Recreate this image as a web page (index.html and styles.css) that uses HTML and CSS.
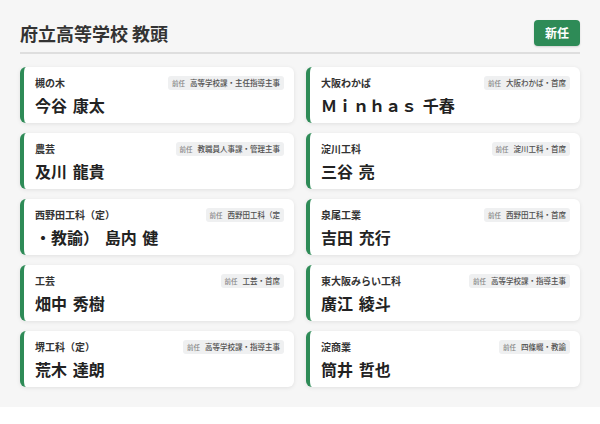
FILE: index.html
```html
<!DOCTYPE html>
<html lang="ja">
<head>
<meta charset="utf-8">
<title>府立高等学校 教頭</title>
<link rel="stylesheet" href="styles.css">
</head>
<body>
<div class="page">
  <header class="header">
    <h1 class="title">府立高等学校 教頭</h1>
    <span class="badge">新任</span>
  </header>
  <div class="grid">
    <div class="card">
      <div class="top"><span class="school">槻の木</span><span class="chip"><span class="prev">前任</span>高等学校課・主任指導主事</span></div>
      <div class="name">今谷 康太</div>
    </div>
    <div class="card">
      <div class="top"><span class="school">大阪わかば</span><span class="chip"><span class="prev">前任</span>大阪わかば・首席</span></div>
      <div class="name">Ｍｉｎｈａｓ 千春</div>
    </div>
    <div class="card">
      <div class="top"><span class="school">農芸</span><span class="chip"><span class="prev">前任</span>教職員人事課・管理主事</span></div>
      <div class="name">及川 龍貴</div>
    </div>
    <div class="card">
      <div class="top"><span class="school">淀川工科</span><span class="chip"><span class="prev">前任</span>淀川工科・首席</span></div>
      <div class="name">三谷 亮</div>
    </div>
    <div class="card">
      <div class="top"><span class="school">西野田工科（定）</span><span class="chip"><span class="prev">前任</span>西野田工科（定</span></div>
      <div class="name">・教諭） 島内 健</div>
    </div>
    <div class="card">
      <div class="top"><span class="school">泉尾工業</span><span class="chip"><span class="prev">前任</span>西野田工科・首席</span></div>
      <div class="name">吉田 充行</div>
    </div>
    <div class="card">
      <div class="top"><span class="school">工芸</span><span class="chip"><span class="prev">前任</span>工芸・首席</span></div>
      <div class="name">畑中 秀樹</div>
    </div>
    <div class="card">
      <div class="top"><span class="school">東大阪みらい工科</span><span class="chip"><span class="prev">前任</span>高等学校課・指導主事</span></div>
      <div class="name">廣江 綾斗</div>
    </div>
    <div class="card">
      <div class="top"><span class="school">堺工科（定）</span><span class="chip"><span class="prev">前任</span>高等学校課・指導主事</span></div>
      <div class="name">荒木 達朗</div>
    </div>
    <div class="card">
      <div class="top"><span class="school">淀商業</span><span class="chip"><span class="prev">前任</span>四條畷・教諭</span></div>
      <div class="name">筒井 哲也</div>
    </div>
  </div>
</div>
</body>
</html>
```

FILE: styles.css
```css
* { box-sizing: border-box; }
html, body {
  margin: 0;
  background: #ffffff;
}
body {
  font-family: "Noto Sans CJK JP", "Noto Sans", sans-serif;
  color: #2a2a2a;
}
.page {
  background: #f6f6f6;
  padding: 20px 20px 20px 20px;
}
.header {
  display: flex;
  align-items: center;
  justify-content: space-between;
  padding-bottom: 6px;
  border-bottom: 2px solid #dedede;
  margin-bottom: 13px;
}
.title {
  margin: 0;
  font-size: 18px;
  font-weight: 700;
  line-height: 26px;
  color: #333333;
}
.badge {
  background: #2e8b57;
  color: #ffffff;
  font-size: 12px;
  font-weight: 700;
  line-height: 16px;
  padding: 5px 11px;
  border-radius: 4px;
  box-shadow: 0 1px 2px rgba(0,0,0,0.15);
}
.grid {
  display: grid;
  grid-template-columns: 1fr 1fr;
  column-gap: 12px;
  row-gap: 10px;
}
.card {
  background: #ffffff;
  border-left: 4px solid #2e8b57;
  border-radius: 6px;
  box-shadow: 0 1px 4px rgba(0,0,0,0.09);
  padding: 9px 10px 8px 11px;
  height: 56px;
}
.top {
  display: flex;
  align-items: center;
  justify-content: space-between;
  height: 14px;
}
.school {
  font-size: 10px;
  font-weight: 700;
  color: #333333;
  line-height: 14px;
}
.chip {
  background: #eff0f1;
  border-radius: 3px;
  font-size: 7.5px;
  font-weight: 500;
  line-height: 14px;
  padding: 0 4px;
  color: #4f4f4f;
  display: flex;
  align-items: center;
  gap: 5px;
}
.prev {
  font-size: 6.5px;
  color: #858585;
}
.name {
  margin-top: 6px;
  font-size: 16px;
  font-weight: 700;
  line-height: 19px;
  color: #222222;
  word-spacing: 2px;
}
```
